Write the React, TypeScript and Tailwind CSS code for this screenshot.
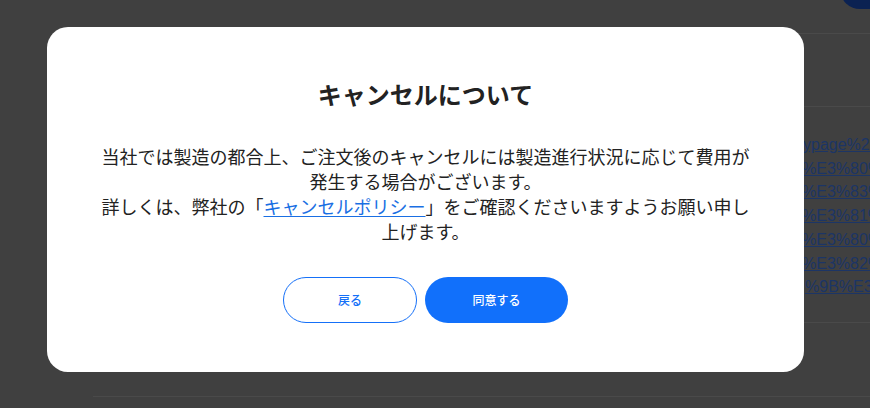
const linkLines = [
  { text: "ypage%2F%E3%81", pad: "pl-[8px]" },
  { text: "%E3%80%90%E3%82", pad: "pl-[7px]" },
  { text: "%E3%83%A3%E3%83", pad: "pl-[7px]" },
  { text: "%E3%81%AE%E3%82", pad: "pl-[7px]" },
  { text: "%E3%80%8D%E3%81", pad: "pl-[7px]" },
  { text: "%E3%82%AD%E3%83", pad: "pl-[7px]" },
  { text: "%9B%E3%83%BC", pad: "pl-[10px]" },
];

function BackgroundPage() {
  return (
    <div className="h-[408px] w-full overflow-hidden bg-[#404040] pl-[93px]">
      <div className="flex h-[34px] justify-end border-b border-[#4a4a4a]">
        <div className="-mt-[31px] -mr-[30px] h-[40px] w-[60px] shrink-0 rounded-full bg-[#0b2252]" />
      </div>
      <div className="h-[73px] border-b border-[#4a4a4a]" />
      <div className="h-[216px] border-b border-[#4a4a4a] pt-[26px] pl-[702px] font-['Liberation_Sans',Arial,sans-serif] text-[16px] leading-[23.7px] text-[#1c3566]">
        {linkLines.map((l) => (
          <div key={l.text} className={`${l.pad} whitespace-nowrap underline`}>
            {l.text}
          </div>
        ))}
      </div>
      <div className="h-[74px] border-b border-[#4a4a4a]" />
    </div>
  );
}

function CancelModal() {
  return (
    <div className="absolute left-[47px] top-[27px] flex w-[757px] flex-col items-center rounded-[21px] bg-white pt-[51px] pb-[49px] text-[#222] font-['Noto_Sans_CJK_JP','Noto_Sans',sans-serif]">
      <h2 className="text-[24px] font-bold leading-[32px]">キャンセルについて</h2>
      <p className="mt-[34px] w-[662px] text-center text-[18px] leading-[25px]">
        当社では製造の都合上、ご注文後のキャンセルには製造進行状況に応じて費用が発生する場合がございます。
        <br />
        詳しくは、弊社の「<a href="#" className="text-[#1a6fe3] underline underline-offset-2">キャンセルポリシー</a>」をご確認くださいますようお願い申し上げます。
      </p>
      <div className="mt-[33px] flex gap-[8px]">
        <button type="button" className="h-[46px] w-[134px] rounded-full border border-[#1570f8] bg-white text-[12px] font-medium text-[#1570f8]">
          戻る
        </button>
        <button type="button" className="h-[46px] w-[143px] rounded-full bg-[#1170fb] text-[12px] font-medium text-white">
          同意する
        </button>
      </div>
    </div>
  );
}

export default function App() {
  return (
    <div className="relative h-[408px] w-[870px] overflow-hidden">
      <BackgroundPage />
      <CancelModal />
    </div>
  );
}
